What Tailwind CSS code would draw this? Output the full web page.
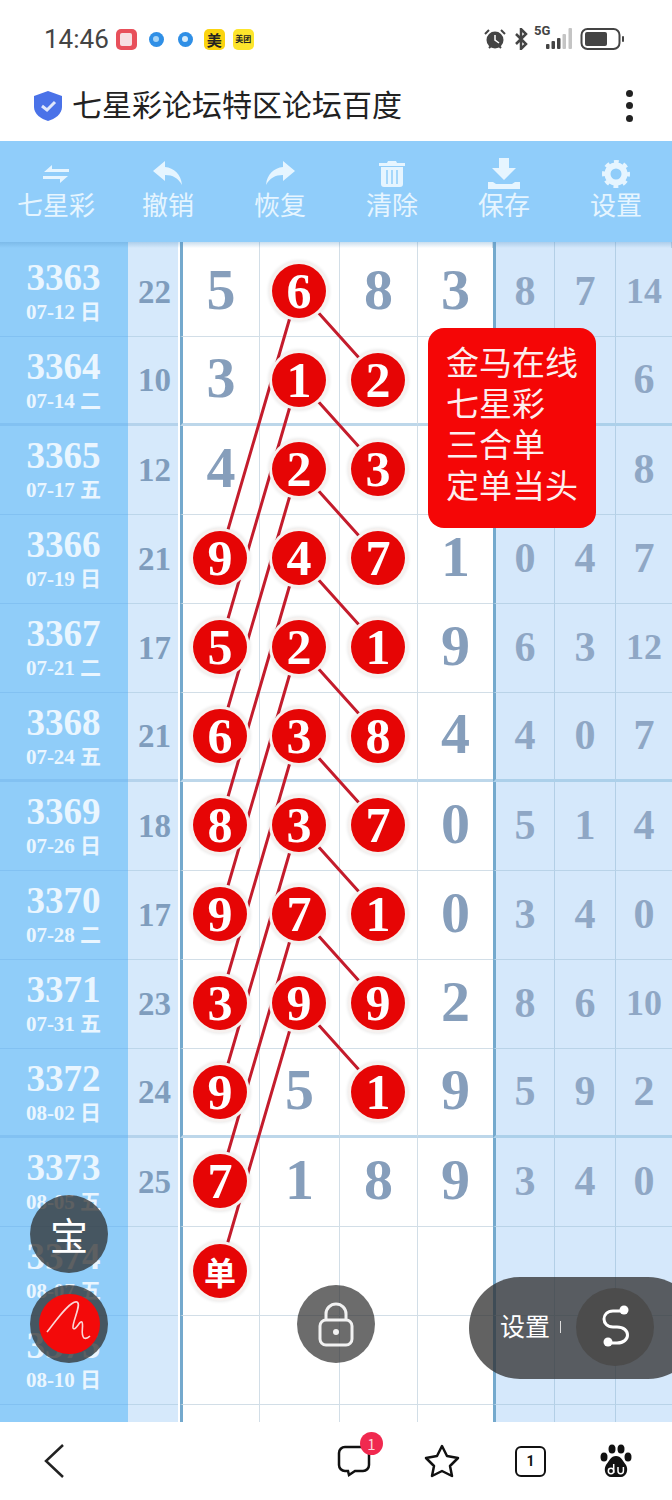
<!DOCTYPE html>
<html lang="zh-CN">
<head>
  <meta charset="UTF-8">
  <meta name="viewport" content="width=device-width, initial-scale=1.0">
  <title>七星彩论坛特区论坛百度</title>
  <script src="https://cdn.jsdelivr.net/npm/@tailwindcss/browser@4"></script>
</head>
<body class="bg-white">
<div class="relative w-[672px] h-[1500px] overflow-hidden bg-white font-['Noto_Sans_CJK_SC','Noto_Sans',sans-serif]">

  <!-- Status bar -->
  <div class="flex items-center h-[70px] pl-[44px] pr-[46px] pt-[8px]">
    <span class="font-['Roboto',sans-serif] text-[26px] leading-none text-[#444]">14:46</span>
    <span class="ml-[7px] w-[21px] h-[21px] rounded-[5px] bg-[#e8505b] flex items-center justify-center"><span class="w-[12px] h-[13px] rounded-[2px] bg-[#f7dfe2]"></span></span>
    <span class="ml-[12px] w-[15px] h-[15px] rounded-full bg-[#2f8fe6] flex items-center justify-center"><span class="w-[6px] h-[6px] rounded-full bg-[#a5d4f7]"></span></span>
    <span class="ml-[14px] w-[15px] h-[15px] rounded-full bg-[#2f8fe6] flex items-center justify-center"><span class="w-[6px] h-[6px] rounded-full bg-[#d5ebfb]"></span></span>
    <span class="ml-[11px] w-[21px] h-[21px] rounded-[5px] bg-[#fbd40f] flex items-center justify-center text-[15px] leading-none font-bold text-[#222]">美</span>
    <span class="ml-[8px] w-[21px] h-[21px] rounded-[5px] bg-[#fde52c] flex items-center justify-center text-[8px] leading-none font-bold text-[#222]">美团</span>
    <div class="ml-auto flex items-center">
      <svg width="22" height="22" viewBox="0 0 22 22"><circle cx="11" cy="12" r="8.500" fill="#444"/><path d="M11 7v5l4 3" stroke="#fff" stroke-width="1.5" fill="none"/><path d="M1 6l4-4M21 6l-4-4M5 20l2-2M17 20l-2-2" stroke="#444" stroke-width="2"/></svg>
      <svg class="ml-[8px]" width="14" height="22" viewBox="0 0 14 22"><path d="M2 6l10 10-5 5V1l5 5L2 16" stroke="#444" stroke-width="2.500" fill="none"/></svg>
      <div class="ml-[6px] relative w-[42px] h-[24px]">
        <span class="absolute left-0 top-[-3px] font-['Roboto',sans-serif] font-bold text-[13px] leading-[14px] text-[#444]">5G</span>
        <svg class="absolute left-0 top-0" width="42" height="24" viewBox="0 0 42 24"><rect x="12" y="17" width="3.500" height="5" rx="1" fill="#444"/><rect x="17.500" y="14" width="3.500" height="8" rx="1" fill="#444"/><rect x="23" y="11" width="3.500" height="11" rx="1" fill="#444"/><rect x="28.500" y="7" width="3.500" height="15" rx="1" fill="#c4c4c4"/><rect x="34.500" y="1" width="3.500" height="21" rx="1" fill="#c4c4c4"/></svg>
      </div>
      <svg class="ml-[4px]" width="46" height="24" viewBox="0 0 46 24"><rect x="1.5" y="2" width="38" height="20" rx="6" fill="none" stroke="#444" stroke-width="2"/><rect x="5" y="5" width="22" height="14" rx="2" fill="#444"/><rect x="42" y="9" width="2" height="6" rx="1" fill="#444"/></svg>
    </div>
  </div>

  <!-- Title bar -->
  <div class="flex items-center h-[71px] pl-[33px] pr-[39px]">
    <svg width="30" height="32" viewBox="0 0 30 32"><path d="M15 1l14 5v11c0 7-7 12-14 14C8 29 1 24 1 17V6z" fill="#4a72e8"/><path d="M9 16l5 4 8-8" stroke="#dfe7fb" stroke-width="3" fill="none"/></svg>
    <span class="ml-[9px] mt-[-5px] text-[30px] leading-none text-[#222]">七星彩论坛特区论坛百度</span>
    <div class="ml-auto flex flex-col gap-[5.5px]">
      <span class="w-[7px] h-[7px] rounded-full bg-[#222]"></span>
      <span class="w-[7px] h-[7px] rounded-full bg-[#222]"></span>
      <span class="w-[7px] h-[7px] rounded-full bg-[#222]"></span>
    </div>
  </div>

  <!-- Toolbar -->
  <div class="grid grid-cols-6 h-[101px] bg-[#90cdfa] text-[#e6f5ff] text-[26px] leading-none">
    <div class="flex flex-col items-center pt-[20px]">
      <svg width="30" height="26" viewBox="0 0 30 26" fill="#e6f5ff"><path d="M3 11l8-7v4h17v3zM27 15l-8 7v-4H2v-3z"/></svg>
      <span class="mt-[4px]">七星彩</span>
    </div>
    <div class="flex flex-col items-center pt-[20px]">
      <svg width="32" height="26" viewBox="0 0 32 26" fill="#e6f5ff"><path d="M13 0L1 10l12 10v-6c8 0 13 3 17 10-1-11-8-17-17-18z"/></svg>
      <span class="mt-[4px]">撤销</span>
    </div>
    <div class="flex flex-col items-center pt-[20px]">
      <svg width="32" height="26" viewBox="0 0 32 26" fill="#e6f5ff"><path d="M19 0l12 10-12 10v-6c-8 0-13 3-17 10 1-11 8-17 17-18z"/></svg>
      <span class="mt-[4px]">恢复</span>
    </div>
    <div class="flex flex-col items-center pt-[20px]">
      <svg width="28" height="26" viewBox="0 0 28 26"><path d="M1 2h8l1-2h8l1 2h8v3H1zM3 6h22v17a3 3 0 0 1-3 3H6a3 3 0 0 1-3-3z" fill="#e6f5ff"/><path d="M9 9v14M14 9v14M19 9v14" stroke="#90cdfa" stroke-width="1.5"/></svg>
      <span class="mt-[4px]">清除</span>
    </div>
    <div class="flex flex-col items-center pt-[17px]">
      <svg width="34" height="31" viewBox="0 0 34 31" fill="#e6f5ff"><path d="M12 0h10v10h7L17 22 5 10h7zM1 24h5l3 2h16l3-2h5v7H1z"/></svg>
      <span class="mt-[2px]">保存</span>
    </div>
    <div class="flex flex-col items-center pt-[19px]">
      <svg width="28" height="28" viewBox="0 0 28 28" fill="none" stroke="#e6f5ff"><circle cx="14" cy="14" r="8.5" stroke-width="6"/><circle cx="14" cy="14" r="12" stroke-width="4" stroke-dasharray="4.7 4.72" stroke-dashoffset="2.35"/></svg>
      <span class="mt-[3px]">设置</span>
    </div>
  </div>

  <!-- Chart -->
  <div class="relative h-[1180px] overflow-hidden">
    <div id="chart" class="grid grid-cols-[128px_52px_80px_80px_78px_75px_62px_61px_56px] grid-rows-[6px_repeat(14,89px)]"></div>
    <div class="absolute left-0 top-0 w-full h-[6px] bg-linear-to-b from-[#4f8fc4]/30 to-transparent"></div>

    <!-- Connecting lines -->
    <svg class="absolute left-0 top-0" width="672" height="1180" viewBox="0 243 672 1180" stroke="#c41c2c" stroke-width="3">
      <path d="M298 291L378 380M298 291L220 558"/>
      <path d="M298 380L378 469M298 380L220 647"/>
      <path d="M298 469L378 558M298 469L220 736"/>
      <path d="M298 558L378 647M298 558L220 825"/>
      <path d="M298 647L378 736M298 647L220 914"/>
      <path d="M298 736L378 825M298 736L220 1003"/>
      <path d="M298 825L378 914M298 825L220 1092"/>
      <path d="M298 914L378 1003M298 914L220 1181"/>
      <path d="M298 1003L378 1092M298 1003L220 1270"/>
    </svg>
    <div id="balls" class="absolute left-0 top-0 w-full grid grid-cols-[128px_52px_79px_80px_78px_76px_61px_61px_57px] grid-rows-[6px_repeat(14,89.1px)]"></div>
  </div>

  <!-- Footer -->
  <div class="flex items-center h-[78px] pl-[44px]">
    <svg width="20" height="36" viewBox="0 0 20 36" fill="none" stroke="#222" stroke-width="2.5"><path d="M19 2L2 18l17 16"/></svg>
    <div class="relative ml-[273px] w-[34px] h-[34px]">
      <svg width="34" height="34" viewBox="0 0 34 34" fill="none" stroke="#111" stroke-width="2.5"><path d="M8 3h18a6 6 0 0 1 6 6v12a6 6 0 0 1-6 6H18l-6 4-1-4H8a6 6 0 0 1-6-6V9a6 6 0 0 1 6-6z"/></svg>
      <span class="absolute right-[-12px] top-[-12px] w-[23px] h-[23px] rounded-full bg-[#f0294f] flex items-center justify-center text-[15px] leading-none text-[#fbd5dc]">1</span>
    </div>
    <svg class="ml-[53px]" width="36" height="34" viewBox="0 0 36 34" fill="none" stroke="#111" stroke-width="2.5" stroke-linejoin="round"><path d="M18 2l5 10 11 2-8 8 2 10-10-5-10 5 2-10-8-8 11-2z"/></svg>
    <div class="ml-[55px] w-[31px] h-[31px] rounded-[6px] border-[2.5px] border-[#111] flex items-center justify-center font-['Roboto',sans-serif] font-bold text-[14px] leading-none text-[#111]">1</div>
    <svg class="ml-[54px]" width="32" height="34" viewBox="0 0 32 34" fill="#111"><ellipse cx="4" cy="13" rx="3.5" ry="4.5"/><ellipse cx="12" cy="5" rx="3.5" ry="4.5"/><ellipse cx="21" cy="5" rx="3.5" ry="4.5"/><ellipse cx="28" cy="13" rx="3.5" ry="4.5"/><path d="M16 12c5 0 7 5 10 9 3 5 0 12-5 12H11c-5 0-8-7-5-12 3-4 5-9 10-9z"/><g fill="none" stroke="#fff" stroke-width="1.500"><circle cx="11" cy="27" r="2.700"/><path d="M13.700 20v9"/><path d="M18 23v4a2.700 2.700 0 0 0 5.400 0v-4"/></g></svg>
  </div>

  <!-- Popup note -->
  <div class="absolute left-[428px] top-[328px] w-[168px] h-[200px] rounded-[16px] bg-[#f50606] pl-[18px] pt-[13px] text-[33px] leading-[41px] text-[#fdeeee]">
    <div>金马在线</div>
    <div>七星彩</div>
    <div>三合单</div>
    <div>定单当头</div>
  </div>

  <!-- Floating buttons -->
  <div class="absolute left-[30px] top-[1195px] w-[78px] h-[78px] rounded-full bg-[#2d2d2d]/75 flex items-center justify-center text-[38px] leading-none text-white">宝</div>
  <div class="absolute left-[30px] top-[1285px] w-[78px] h-[78px] rounded-full bg-[#2d2d2d]/75 flex items-center justify-center">
    <div class="w-[61px] h-[60px] rounded-full bg-[#f30a0a] flex items-center justify-center">
      <svg width="61" height="60" viewBox="0 0 61 60" fill="none" stroke="#fbd7d7" stroke-width="1.600"><path d="M8 38C16 28 31 6 38 8c5 2-5 20-4 26 2 4 7-8 9-6 2 4-2 12 2 16 2 1 4 0 6-2"/></svg>
    </div>
  </div>
  <div class="absolute left-[297px] top-[1285px] w-[78px] h-[78px] rounded-full bg-[#2d2d2d]/70 flex items-center justify-center">
    <svg width="38" height="46" viewBox="0 0 38 46" fill="none" stroke="#f2f2f2" stroke-width="3"><path d="M9 19v-6a10 10 0 0 1 20 0v6"/><rect x="3" y="19" width="32" height="25" rx="6"/><circle cx="19" cy="31" r="3" fill="#f2f2f2" stroke="none"/></svg>
  </div>
  <div class="absolute left-[469px] top-[1277px] w-[230px] h-[102px] rounded-full bg-[#2d2d2d]/75 flex items-center pl-[31px]">
    <span class="mt-[-5px] text-[25px] leading-none text-white">设置</span>
    <span class="ml-[10px] mt-[-3px] w-[1px] h-[12px] bg-[#ddd]"></span>
    <div class="ml-[15px] mt-[-3px] w-[78px] h-[78px] rounded-full bg-[#4c4c4c] flex items-center justify-center">
      <svg width="40" height="44" viewBox="0 0 40 44" fill="none" stroke="#fff" stroke-width="3"><path d="M28 6H18C6 6 6 22 18 22h4c14 0 14 16 0 16H12"/><circle cx="29" cy="5" r="4.500" fill="#fff" stroke="none"/><circle cx="13" cy="37" r="4.500" fill="#fff" stroke="none"/></svg>
    </div>
  </div>
</div>

<script>
  // issue, date, stat, four main numbers (* = red ball), three right numbers
  const rows = [
    ['3363', '07-12 日', '22', ['5', '6*', '8', '3'], ['8', '7', '14']],
    ['3364', '07-14 二', '10', ['3', '1*', '2*', ''], ['', '', '6']],
    ['3365', '07-17 五', '12', ['4', '2*', '3*', ''], ['', '', '8']],
    ['3366', '07-19 日', '21', ['9*', '4*', '7*', '1'], ['0', '4', '7']],
    ['3367', '07-21 二', '17', ['5*', '2*', '1*', '9'], ['6', '3', '12']],
    ['3368', '07-24 五', '21', ['6*', '3*', '8*', '4'], ['4', '0', '7']],
    ['3369', '07-26 日', '18', ['8*', '3*', '7*', '0'], ['5', '1', '4']],
    ['3370', '07-28 二', '17', ['9*', '7*', '1*', '0'], ['3', '4', '0']],
    ['3371', '07-31 五', '23', ['3*', '9*', '9*', '2'], ['8', '6', '10']],
    ['3372', '08-02 日', '24', ['9*', '5', '1*', '9'], ['5', '9', '2']],
    ['3373', '08-05 五', '25', ['7*', '1', '8', '9'], ['3', '4', '0']],
    ['3374', '08-07 五', '', ['单*', '', '', ''], ['', '', '']],
    ['3375', '08-10 日', '', ['', '', '', ''], ['', '', '']],
    ['', '', '', ['', '', '', ''], ['', '', '']]
  ];

  const serif = "font-['Liberation_Serif','Noto_Sans_CJK_SC',serif] font-bold";
  const chart = document.getElementById('chart');
  const balls = document.getElementById('balls');

  function cell(cls, html) {
    return '<div class="' + cls + '">' + html + '</div>';
  }

  function rowCells(r, i) {
    const thick = i % 4 === 1;
    const date = thick ? 'border-b-[3px] border-[#82c1f2]' : 'border-b border-[#82c1f2]';
    const stat = thick ? 'border-b-[3px] border-[#b5d3ec]' : 'border-b border-[#bcd6ea]';
    const main = thick ? 'border-b-[3px] border-b-[#bdd7ea]' : 'border-b border-b-[#d2dee7]';
    const side = thick ? 'border-b-[3px] border-b-[#acd0ea]' : 'border-b border-b-[#b9d3e8]';
    let html = cell('bg-[#90cdf9] text-[#eaf6ff] flex flex-col items-center pt-[11px] pr-[1px] ' + date + ' ' + serif,
      '<span class="text-[37px] leading-[37px]">' + r[0] + '</span><span class="mt-[4px] text-[21px] leading-[24px]">' + r[1] + '</span>');
    html += cell('bg-[#d6e9fb] mr-[2px] pl-[3px] pt-[2px] flex items-center justify-center text-[33px] text-[#7f9dbd] ' + stat + ' ' + serif, r[2]);
    r[3].forEach((v, c) => {
      const edge = c === 0 ? 'border-l-[3px] border-l-[#74a9cd] ' : '';
      const right = c === 3 ? '' : 'border-r border-r-[#d2dee7] ';
      html += cell('bg-white pb-[5px] flex items-center justify-center text-[58px] text-[#869ebb] ' + edge + right + main + ' ' + serif, v.endsWith('*') ? '' : v);
    });
    r[4].forEach((v, c) => {
      const edge = c === 0 ? 'border-l-[3px] border-l-[#74a9cd] ' : '';
      const right = c === 2 ? '' : 'border-r border-r-[#b3cfe6] ';
      const size = v.length > 1 ? 'text-[36px] ' : 'text-[42px] ';
      html += cell('bg-[#d5e8fb] pb-[2px] flex items-center justify-center text-[#8fa7c5] ' + size + edge + right + side + ' ' + serif, v);
    });
    return html;
  }

  function ballCells(r) {
    let html = '<div></div><div></div>';
    r[3].forEach((v, c) => {
      const inset = c === 0 ? 'pl-[1px]' : '';
      let inner = '';
      if (v.endsWith('*')) {
        const label = v.slice(0, -1);
        const font = label === '单'
          ? "font-['Noto_Sans_CJK_SC',sans-serif] font-bold text-[32px]"
          : "font-['Liberation_Serif',serif] font-bold text-[50px]";
        inner = '<div class="w-[54px] h-[54px] rounded-full bg-[#e60505] text-white leading-none flex items-center justify-center shadow-[0_0_0_3px_#f6f1ef,0_0_3px_4px_#00000014] ' + font + '">' + label + '</div>';
      }
      html += cell('pb-[4px] flex items-center justify-center ' + inset, inner);
    });
    html += '<div></div><div></div><div></div>';
    return html;
  }

  // thin top strip, then one row of cells per issue
  let strip = cell('bg-[#90cdf9]', '') + cell('bg-[#d6e9fb] mr-[2px]', '');
  for (let c = 0; c < 4; c++) {
    strip += cell('bg-white border-r border-r-[#d2dee7] ' + (c === 0 ? 'border-l-[3px] border-l-[#74a9cd]' : ''), '');
  }
  for (let c = 0; c < 3; c++) {
    strip += cell('bg-[#d5e8fb] border-r border-r-[#b3cfe6] ' + (c === 0 ? 'border-l-[3px] border-l-[#74a9cd]' : ''), '');
  }
  chart.innerHTML = strip + rows.map(rowCells).join('');
  balls.innerHTML = '<div class="col-span-9"></div>' + rows.map(ballCells).join('');
</script>
</body>
</html>
